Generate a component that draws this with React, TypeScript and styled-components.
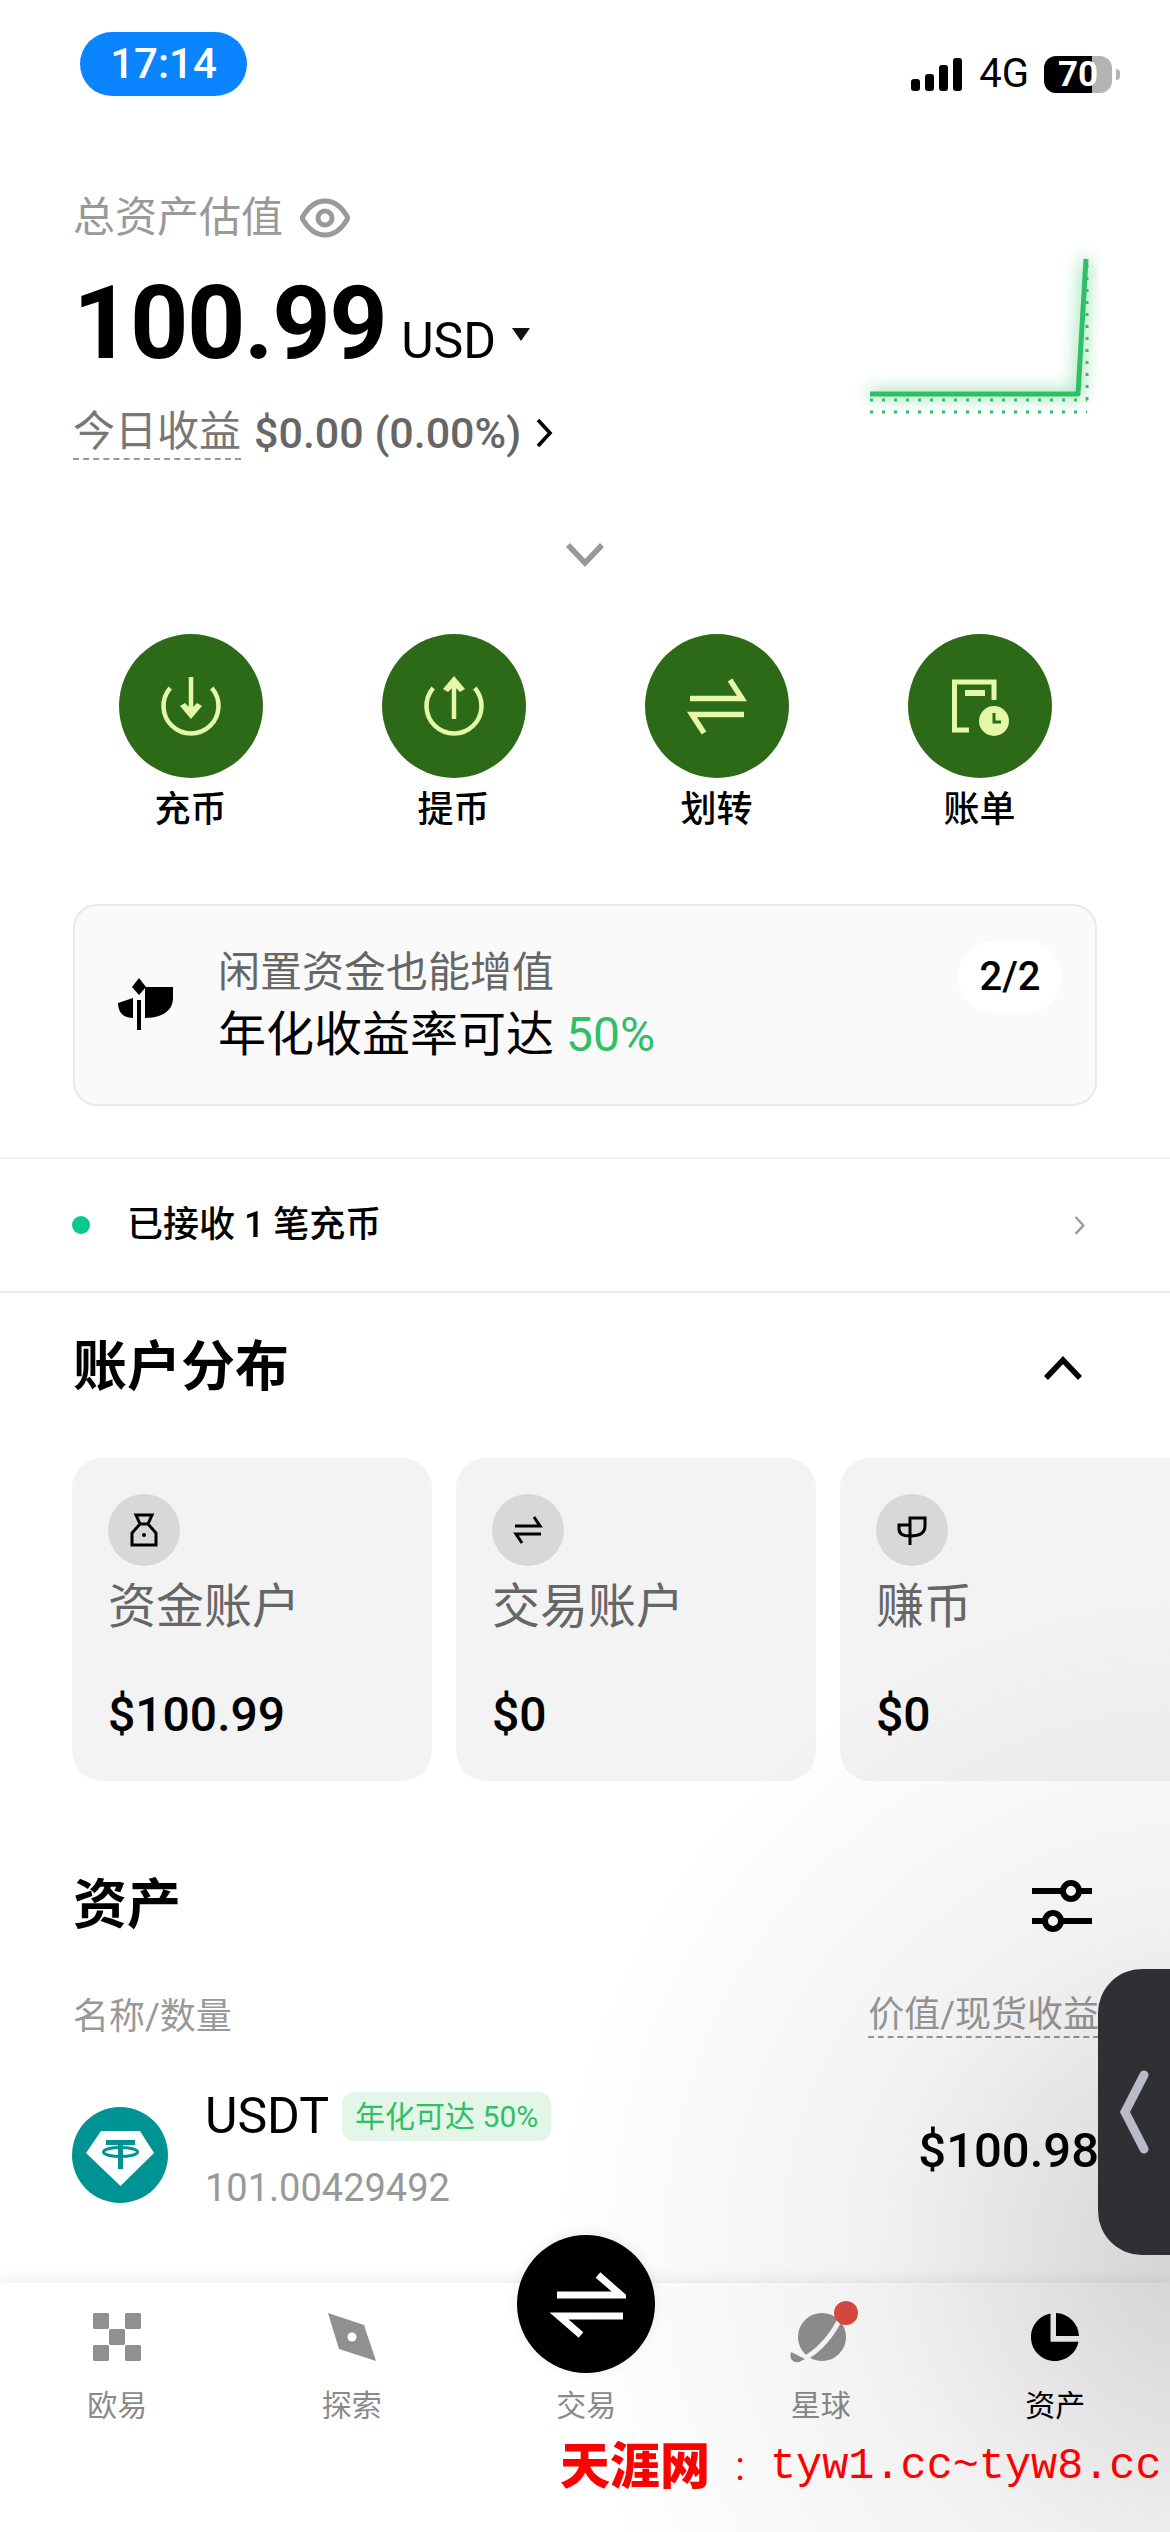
import React from "react";
import styled, {createGlobalStyle} from "styled-components";

const GlobalStyle = createGlobalStyle`
	html, body {
		margin: 0;
		padding: 0;
		background: #fff;
	}
	* {
		box-sizing: border-box;
	}
`;

const Page = styled.div`
	position: relative;
	width: 1170px;
	height: 2532px;
	display: flex;
	flex-direction: column;
	overflow: hidden;
	background: #fff;
	color: #000;
	font-family: Roboto, "Noto Sans CJK SC", sans-serif;
`;

const Shade = styled.div`
	position: absolute;
	inset: 0;
	z-index: 5;
	pointer-events: none;
	background: radial-gradient(circle 660px at 1210px 2250px, rgba(0, 0, 0, 0.18), rgba(0, 0, 0, 0.055) 50%, rgba(0, 0, 0, 0));
`;

const StatusBar = styled.div`
	height: 96px;
	padding: 32px 58px 0 80px;
	display: flex;
	justify-content: space-between;
	align-items: flex-start;
`;

const TimePill = styled.div`
	width: 167px;
	height: 64px;
	border-radius: 32px;
	background: #0a84ff;
	color: #fff;
	font-size: 42px;
	font-weight: 500;
	line-height: 64px;
	text-align: center;
`;

const StatusRight = styled.div`
	display: flex;
	align-items: flex-end;
	margin-top: 23px;
`;

const Signal = styled.div`
	display: flex;
	align-items: flex-end;
	gap: 5px;
	height: 36px;
	padding-bottom: 2px;
`;

const SignalBar = styled.div<{h: number}>`
	width: 9px;
	height: ${({h}) => h}px;
	border-radius: 3px;
	background: #000;
`;

const Network = styled.div`
	margin-left: 17px;
	font-size: 40px;
	font-weight: 400;
	line-height: 38px;
`;

const Battery = styled.div`
	position: relative;
	width: 68px;
	height: 37px;
	margin-left: 15px;
	border-radius: 12px;
	background: linear-gradient(to right, #000 70%, #b4b4b4 70%);
	color: #fff;
	font-size: 35px;
	font-weight: 700;
	line-height: 37px;
	text-align: center;
	&::after {
		content: "";
		position: absolute;
		right: -8px;
		top: 13px;
		width: 4px;
		height: 11px;
		border-radius: 0 6px 6px 0;
		background: #b4b4b4;
	}
`;

const Summary = styled.section`
	padding: 100px 70px 0 73px;
	display: flex;
	justify-content: space-between;
	align-items: flex-start;
`;

const SummaryLeft = styled.div`
	display: flex;
	flex-direction: column;
`;

const TitleRow = styled.div`
	display: flex;
	align-items: center;
	gap: 17px;
	height: 44px;
	font-size: 42px;
	line-height: 44px;
	color: #999;
`;

const AmountRow = styled.div`
	display: flex;
	align-items: baseline;
	margin-top: 33px;
	height: 99px;
	line-height: 100px;
`;

const Amount = styled.span`
	font-size: 102px;
	font-weight: 700;
	letter-spacing: -1.5px;
`;

const Currency = styled.span`
	margin-left: 15px;
	font-size: 50px;
	font-weight: 400;
`;

const Caret = styled.span`
	align-self: center;
	margin: 24px 0 0 16px;
	width: 0;
	height: 0;
	border-left: 9px solid transparent;
	border-right: 9px solid transparent;
	border-top: 13px solid #111;
`;

const TodayRow = styled.div`
	display: flex;
	align-items: center;
	gap: 13px;
	margin-top: 36px;
	height: 50px;
	font-size: 43px;
	line-height: 50px;
	color: #666;
`;

const Dashed = styled.span`
	border-bottom: 2px dashed #999;
`;

const TodayLabel = styled(Dashed)`
	color: #777;
	font-size: 42px;
	font-weight: 400;
	line-height: 50px;
	padding-bottom: 1px;
`;

const TodayValue = styled.span`
	font-weight: 500;
`;

const Chart = styled.svg`
	margin-top: 49px;
	display: block;
`;

const Expand = styled.div`
	display: flex;
	justify-content: center;
	margin-top: 84px;
`;

const Actions = styled.div`
	display: grid;
	grid-template-columns: repeat(4, 263px);
	padding-left: 59px;
	margin-top: 66px;
`;

const Action = styled.div`
	display: flex;
	flex-direction: column;
	align-items: center;
	gap: 12px;
`;

const ActionCircle = styled.div`
	width: 144px;
	height: 144px;
	border-radius: 50%;
	background: #2d6a17;
	display: flex;
	align-items: center;
	justify-content: center;
`;

const ActionLabel = styled.div`
	font-size: 36px;
	font-weight: 500;
	line-height: 40px;
`;

const Banner = styled.div`
	margin: 74px 73px 0;
	height: 202px;
	padding: 40px 33px 0 42px;
	display: flex;
	align-items: flex-start;
	border: 2px solid #e9e9e9;
	border-radius: 24px;
	background: #fafafa;
`;

const BannerIcon = styled.div`
	flex: none;
	width: 56px;
	height: 52px;
	margin: 32px 45px 0 0;
`;

const BannerText = styled.div`
	flex: 1;
`;

const BannerTop = styled.div`
	font-size: 42px;
	line-height: 54px;
	color: #666;
`;

const BannerBottom = styled.div`
	margin-top: 5px;
	font-size: 48px;
	line-height: 60px;
`;

const Green = styled.span`
	color: #2fbf66;
`;

const Pager = styled.div`
	width: 104px;
	height: 72px;
	margin-top: -5px;
	border-radius: 36px;
	background: #fff;
	font-size: 40px;
	font-weight: 500;
	line-height: 72px;
	text-align: center;
`;

const Notice = styled.div`
	margin-top: 51px;
	height: 136px;
	padding: 0 84px 0 72px;
	display: flex;
	align-items: center;
	border-top: 2px solid #f2f2f2;
	border-bottom: 2px solid #ebebeb;
`;

const NoticeDot = styled.div`
	width: 18px;
	height: 18px;
	border-radius: 50%;
	background: #08c88f;
`;

const NoticeText = styled.div`
	flex: 1;
	margin-left: 37px;
	font-size: 36px;
	font-weight: 500;
	line-height: 44px;
`;

const SectionHead = styled.div<{top: number}>`
	display: flex;
	justify-content: space-between;
	align-items: center;
	height: 60px;
	margin-top: ${({top}) => top}px;
	padding: 0 78px 0 73px;
`;

const SectionTitle = styled.h2`
	margin: 0;
	font-size: 54px;
	font-weight: 700;
	line-height: 60px;
`;

const CollapseToggle = styled.div`
	margin-right: 9px;
	height: 26px;
`;

const Accounts = styled.div`
	display: flex;
	gap: 24px;
	margin-top: 60px;
	padding-left: 72px;
	width: 1600px;
`;

const AccountCard = styled.div`
	width: 360px;
	height: 323px;
	padding: 36px 36px 0;
	border-radius: 30px;
	background: #f3f3f3;
`;

const AccountIcon = styled.div`
	width: 72px;
	height: 72px;
	border-radius: 50%;
	background: #d8d8d8;
	display: flex;
	align-items: center;
	justify-content: center;
`;

const AccountName = styled.div`
	margin-top: 13px;
	font-size: 48px;
	line-height: 56px;
	color: #666;
`;

const AccountValue = styled.div`
	margin-top: 52px;
	font-size: 48px;
	font-weight: 500;
	line-height: 56px;
`;

const Columns = styled.div`
	display: flex;
	justify-content: space-between;
	align-items: flex-end;
	margin-top: 54px;
	padding: 0 71px 0 73px;
	height: 48px;
	font-size: 36px;
	line-height: 42px;
	color: #999;
`;

const AssetRow = styled.div`
	display: flex;
	align-items: center;
	margin-top: 55px;
	padding: 0 73px 0 72px;
	height: 116px;
`;

const AssetLogo = styled.div`
	flex: none;
	width: 96px;
	height: 96px;
	margin-top: 8px;
`;

const AssetInfo = styled.div`
	flex: 1;
	margin-left: 37px;
`;

const AssetTop = styled.div`
	display: flex;
	align-items: center;
	gap: 13px;
	height: 50px;
`;

const AssetName = styled.span`
	font-size: 50px;
	font-weight: 400;
	line-height: 50px;
`;

const AssetTag = styled.span`
	height: 49px;
	padding: 0 13px;
	border-radius: 12px;
	background: #e3f6e8;
	color: #2fbf66;
	font-size: 30px;
	line-height: 49px;
`;

const AssetQty = styled.div`
	margin-top: 24px;
	font-size: 38px;
	line-height: 46px;
	color: #999;
`;

const AssetValue = styled.div`
	margin-right: -2px;
	font-size: 49px;
	font-weight: 500;
	line-height: 60px;
`;

const SideTab = styled.div`
	position: absolute;
	top: 1969px;
	right: 0;
	z-index: 6;
	width: 72px;
	height: 286px;
	border-radius: 44px 0 0 44px;
	background: #2f3033;
	display: flex;
	align-items: center;
	justify-content: center;
`;

const TabBar = styled.nav`
	margin-top: auto;
	height: 249px;
	display: grid;
	grid-template-columns: repeat(5, 234.5px);
	padding: 30px 0 0 0;
	background: #fff;
	box-shadow: 0 -4px 14px rgba(0, 0, 0, 0.07);
	position: relative;
`;

const Tab = styled.div<{active?: boolean}>`
	position: relative;
	display: flex;
	flex-direction: column;
	align-items: center;
	gap: 27px;
	font-size: 30px;
	line-height: 36px;
	color: ${({active}) => (active ? "#000" : "#8a8a8a")};
`;

const TabIcon = styled.div`
	width: 48px;
	height: 48px;
`;

const TradeButton = styled.div`
	position: absolute;
	top: -78px;
	left: 50%;
	width: 138px;
	height: 138px;
	margin-left: -69px;
	border-radius: 50%;
	background: #000;
	box-shadow: 0 -2px 12px rgba(0, 0, 0, 0.08);
	display: flex;
	align-items: center;
	justify-content: center;
`;

const Watermark = styled.div`
	position: absolute;
	left: 560px;
	top: 2437px;
	z-index: 6;
	display: flex;
	align-items: center;
	color: #f00;
	white-space: nowrap;
`;

const WatermarkName = styled.span`
	font-size: 50px;
	font-weight: 900;
	line-height: 60px;
`;

const WatermarkColon = styled.span`
	width: 60px;
	font-size: 40px;
	line-height: 60px;
	text-align: center;
`;

const WatermarkUrl = styled.span`
	font-family: "Liberation Mono", monospace;
	font-size: 43.5px;
	line-height: 60px;
`;

const Eye = () => (
	<svg width="50" height="40" viewBox="0 0 50 40" fill="none">
		<path d="M2 20C8 9 16 3 25 3s17 6 23 17c-6 11-14 17-23 17S8 31 2 20Z" stroke="#999" strokeWidth="5" />
		<circle cx="25" cy="20" r="7" stroke="#999" strokeWidth="5" />
	</svg>
);

const SmallChevronRight = ({color, size}: {color: string; size: number}) => (
	<svg width={size} height={size * 1.6} viewBox="0 0 20 32" fill="none">
		<path d="M4 3l12 13L4 29" stroke={color} strokeWidth="3.6" />
	</svg>
);

const WideChevron = ({color, up}: {color: string; up?: boolean}) => (
	<svg width="40" height="26" viewBox="0 0 40 26" fill="none">
		<path d={up ? "M3 23L20 5l17 18" : "M3 3l17 18L37 3"} stroke={color} strokeWidth="5.5" />
	</svg>
);

const DepositIcon = () => (
	<svg width="72" height="72" viewBox="0 0 72 72" fill="none" stroke="#e4f8a8">
		<path d="M15.2 18A27.5 27.5 0 1 0 56.8 18" strokeWidth="4.5" />
		<path d="M36 7V42" strokeWidth="4.5" />
		<path d="M25 36l5-3 6 6 6-6 5 3-11 13Z" fill="#e4f8a8" stroke="none" />
	</svg>
);

const WithdrawIcon = () => (
	<svg width="72" height="72" viewBox="0 0 72 72" fill="none" stroke="#e4f8a8">
		<path d="M15.2 18A27.5 27.5 0 1 0 56.8 18" strokeWidth="4.5" />
		<path d="M36 14V49" strokeWidth="4.5" />
		<path d="M25 19l5 3 6-6 6 6 5-3L36 6Z" fill="#e4f8a8" stroke="none" />
	</svg>
);

const TransferIcon = () => (
	<svg width="72" height="72" viewBox="0 0 72 72" fill="none">
		<path d="M9 28.500H61L49 10M63 44.500H11L23 63" stroke="#e4f8a8" strokeWidth="5.500" />
	</svg>
);

const BillIcon = () => (
	<svg width="72" height="72" viewBox="0 0 72 72" fill="none">
		<path d="M25 60H10.500V12H50V30" stroke="#e4f8a8" strokeWidth="5" />
		<rect x="21" y="20" width="20" height="6" fill="#e4f8a8" />
		<circle cx="50" cy="51" r="15" fill="#e4f8a8" />
		<path d="M50 43v9h7" stroke="#2d6a17" strokeWidth="3" />
	</svg>
);

const SproutIcon = () => (
	<svg width="56" height="52" viewBox="0 0 56 52">
		<path d="M22 0l7 9-7 8-7-8Z" />
		<path d="M28 9H56V20C56 32 46 40 28 40Z" />
		<path d="M1 25L16 20V40C7 40 1 35 1 25Z" />
		<rect x="20" y="22" width="4" height="30" />
	</svg>
);

const BagIcon = () => (
	<svg width="28" height="34" viewBox="0 0 28 34" fill="none" stroke="#000" strokeWidth="3">
		<path d="M6 2H22L18 11L26 20V32H2V20L10 11Z" />
		<path d="M10 11H18" />
		<circle cx="14" cy="22" r="2" fill="#000" stroke="none" />
	</svg>
);

const SwapIcon = () => (
	<svg width="30" height="30" viewBox="0 0 30 30" fill="none" stroke="#000" strokeWidth="3">
		<path d="M2 11H27L21 2M28 19H3L9 28" />
	</svg>
);

const LeafIcon = () => (
	<svg width="30" height="32" viewBox="0 0 30 32" fill="none" stroke="#000" strokeWidth="3">
		<path d="M13 4H28V12C28 19 22 22 13 22Z" />
		<path d="M13 11H2V15C2 20 7 22 13 22V31" />
	</svg>
);

const FilterIcon = () => (
	<svg width="60" height="52" viewBox="0 0 60 52" fill="none" stroke="#000" strokeWidth="6">
		<path d="M0 11H29M49 11H60M0 41H11M31 41H60" />
		<circle cx="39" cy="11" r="8" />
		<circle cx="21" cy="41" r="8" />
	</svg>
);

const TetherLogo = () => (
	<svg width="96" height="96" viewBox="0 0 96 96" fill="none">
		<circle cx="48" cy="48" r="48" fill="#009393" />
		<path d="M29 24H68L82 46 48.500 79 14 46Z" fill="#fff" />
		<path d="M34 35.500H63M48.500 35.500V62" stroke="#009393" strokeWidth="5" />
		<ellipse cx="48.500" cy="45" rx="17" ry="4.500" stroke="#009393" strokeWidth="3" />
	</svg>
);

const OkxIcon = () => (
	<svg width="48" height="48" viewBox="0 0 48 48" fill="#909090">
		<rect width="16" height="16" rx="1.500" />
		<rect x="32" width="16" height="16" rx="1.500" />
		<rect x="16" y="16" width="16" height="16" rx="1.500" />
		<rect y="32" width="16" height="16" rx="1.500" />
		<rect x="32" y="32" width="16" height="16" rx="1.500" />
	</svg>
);

const CompassIcon = () => (
	<svg width="48" height="48" viewBox="0 0 48 48">
		<path d="M0 0L36 12 48 48 11 36Z" fill="#909090" />
		<circle cx="24" cy="24" r="4.500" fill="#fff" />
	</svg>
);

const PlanetIcon = () => (
	<svg width="72" height="64" viewBox="0 0 72 64" style={{margin: "-12px 0 0 -8px", display: "block"}}>
		<circle cx="33" cy="36" r="24" fill="#909090" />
		<path d="M6 60C24 58 42 36 50 20" fill="none" stroke="#fdfdfd" strokeWidth="5" />
		<path d="M2 51C0 58 4 62 10 61L16 58Z" fill="#909090" />
		<circle cx="57" cy="12" r="12" fill="#e04a3f" />
	</svg>
);

const PieIcon = () => (
	<svg width="48" height="48" viewBox="0 0 48 48">
		<path d="M19.500 .5A24 24 0 1 0 47.500 28.700H19.500Z" />
		<path d="M25 0A24 24 0 0 1 48 23H25Z" />
	</svg>
);

const TradeIcon = () => (
	<svg width="80" height="80" viewBox="0 0 80 80" fill="none">
		<path d="M11 31H75L52 11M77 52H13L35 71" stroke="#fff" strokeWidth="7" />
	</svg>
);

const actions = [
	{label: "充币", icon: <DepositIcon />},
	{label: "提币", icon: <WithdrawIcon />},
	{label: "划转", icon: <TransferIcon />},
	{label: "账单", icon: <BillIcon />}
];

const accounts = [
	{name: "资金账户", value: "$100.99", icon: <BagIcon />},
	{name: "交易账户", value: "$0", icon: <SwapIcon />},
	{name: "赚币", value: "$0", icon: <LeafIcon />}
];

export default function App() {
	return (
		<Page>
			<GlobalStyle />
			<StatusBar>
				<TimePill>17:14</TimePill>
				<StatusRight>
					<Signal>
						<SignalBar h={12} />
						<SignalBar h={17} />
						<SignalBar h={26} />
						<SignalBar h={33} />
					</Signal>
					<Network>4G</Network>
					<Battery>70</Battery>
				</StatusRight>
			</StatusBar>

			<Summary>
				<SummaryLeft>
					<TitleRow>
						总资产估值 <Eye />
					</TitleRow>
					<AmountRow>
						<Amount>100.99</Amount>
						<Currency>USD</Currency>
						<Caret />
					</AmountRow>
					<TodayRow>
						<TodayLabel>今日收益</TodayLabel>
						<TodayValue>$0.00 (0.00%)</TodayValue>
						<SmallChevronRight color="#000" size={20} />
					</TodayRow>
				</SummaryLeft>
				<Chart width="242" height="180" viewBox="0 0 242 180" fill="none">
					<defs>
						<filter id="glow" x="-20%" y="-20%" width="140%" height="140%">
							<feGaussianBlur stdDeviation="8" />
						</filter>
					</defs>
					<path d="M12 149H220L228 14" stroke="#2fbf66" strokeOpacity="0.5" strokeWidth="10" filter="url(#glow)" />
					<path d="M12 167H229" stroke="#2fbf66" strokeOpacity="0.3" strokeWidth="10" filter="url(#glow)" />
					<path d="M12 155H229M12 167H229M229 20V155" stroke="#2fbf66" strokeWidth="3" strokeDasharray="3 9" />
					<path d="M12 149H220L228 14" stroke="#2fbf66" strokeWidth="5" strokeLinejoin="round" />
				</Chart>
			</Summary>

			<Expand>
				<WideChevron color="#999" />
			</Expand>

			<Actions>
				{actions.map((a) => (
					<Action key={a.label}>
						<ActionCircle>{a.icon}</ActionCircle>
						<ActionLabel>{a.label}</ActionLabel>
					</Action>
				))}
			</Actions>

			<Banner>
				<BannerIcon>
					<SproutIcon />
				</BannerIcon>
				<BannerText>
					<BannerTop>闲置资金也能增值</BannerTop>
					<BannerBottom>
						年化收益率可达 <Green>50%</Green>
					</BannerBottom>
				</BannerText>
				<Pager>2/2</Pager>
			</Banner>

			<Notice>
				<NoticeDot />
				<NoticeText>已接收 1 笔充币</NoticeText>
				<SmallChevronRight color="#999" size={13} />
			</Notice>

			<SectionHead top={45}>
				<SectionTitle>账户分布</SectionTitle>
				<CollapseToggle>
					<WideChevron color="#000" up />
				</CollapseToggle>
			</SectionHead>

			<Accounts>
				{accounts.map((a) => (
					<AccountCard key={a.name}>
						<AccountIcon>{a.icon}</AccountIcon>
						<AccountName>{a.name}</AccountName>
						<AccountValue>{a.value}</AccountValue>
					</AccountCard>
				))}
			</Accounts>

			<SectionHead top={95}>
				<SectionTitle>资产</SectionTitle>
				<FilterIcon />
			</SectionHead>

			<Columns>
				<span>名称/数量</span>
				<Dashed>价值/现货收益</Dashed>
			</Columns>

			<AssetRow>
				<AssetLogo>
					<TetherLogo />
				</AssetLogo>
				<AssetInfo>
					<AssetTop>
						<AssetName>USDT</AssetName>
						<AssetTag>年化可达 50%</AssetTag>
					</AssetTop>
					<AssetQty>101.00429492</AssetQty>
				</AssetInfo>
				<AssetValue>$100.98</AssetValue>
			</AssetRow>

			<SideTab>
				<svg width="30" height="84" viewBox="0 0 30 84" fill="none">
					<path d="M25 5L6 42l19 37" stroke="#b9bcc8" strokeWidth="9" strokeLinecap="round" />
				</svg>
			</SideTab>

			<TabBar>
				<Tab>
					<TabIcon>
						<OkxIcon />
					</TabIcon>
					欧易
				</Tab>
				<Tab>
					<TabIcon>
						<CompassIcon />
					</TabIcon>
					探索
				</Tab>
				<Tab>
					<TradeButton>
						<TradeIcon />
					</TradeButton>
					<TabIcon />
					交易
				</Tab>
				<Tab>
					<TabIcon>
						<PlanetIcon />
					</TabIcon>
					星球
				</Tab>
				<Tab active>
					<TabIcon>
						<PieIcon />
					</TabIcon>
					资产
				</Tab>
			</TabBar>

			<Watermark>
				<WatermarkName>天涯网</WatermarkName>
				<WatermarkColon>:</WatermarkColon>
				<WatermarkUrl>tyw1.cc~tyw8.cc</WatermarkUrl>
			</Watermark>

			<Shade />
		</Page>
	);
}
